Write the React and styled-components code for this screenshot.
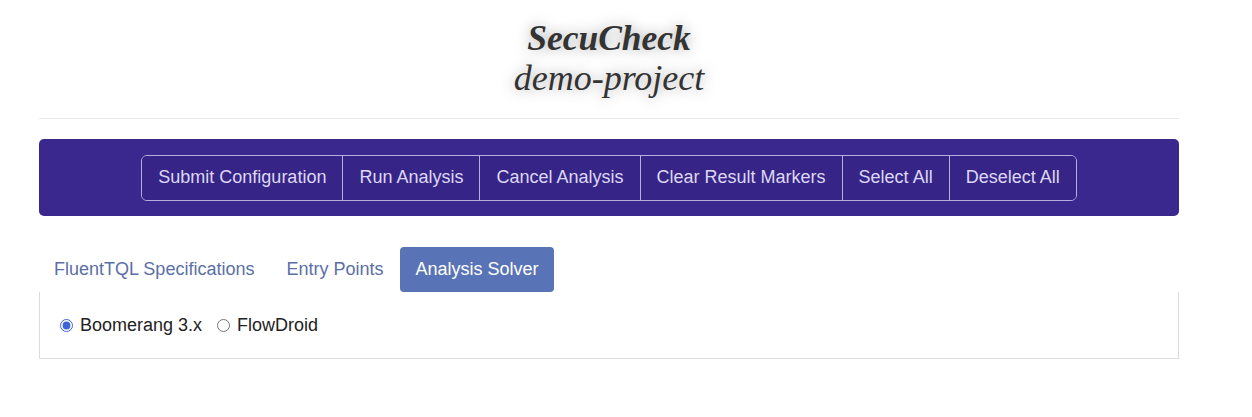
import React, { useState } from "react";
import styled, { createGlobalStyle } from "styled-components";

const GlobalStyle = createGlobalStyle`
  body {
    margin: 0;
    background: #fff;
    font-family: "Liberation Sans", Arial, sans-serif;
  }
`;

const Page = styled.div`
  width: 1140px;
  margin-left: 39px;
  padding-top: 19px;
`;

const Header = styled.header`
  display: flex;
  flex-direction: column;
  align-items: center;
  font-family: "Liberation Serif", "Times New Roman", serif;
  font-style: italic;
  color: #333;
  text-shadow: 0 0 14px rgba(0, 0, 0, 0.35);
  padding-bottom: 20px;
  border-bottom: 1px solid #eaeaea;
`;

const Title = styled.h1`
  margin: 0;
  font-size: 35.5px;
  font-weight: bold;
  line-height: 39px;
`;

const Subtitle = styled.h2`
  margin: 0;
  font-size: 36px;
  font-weight: normal;
  line-height: 40px;
`;

const Toolbar = styled.div`
  margin-top: 20px;
  height: 77px;
  background: #3b288f;
  border-radius: 5px;
  display: flex;
  align-items: center;
  justify-content: center;
`;

const ButtonGroup = styled.div`
  display: flex;
  border: 1px solid #b7aee0;
  border-radius: 6px;
  overflow: hidden;
`;

const ToolButton = styled.button`
  height: 44px;
  padding: 0 16px;
  background: #362587;
  color: #ddd7f5;
  border: none;
  border-left: ${(p) => (p.$first ? "none" : "1px solid #b7aee0")};
  font-family: "Liberation Sans", Arial, sans-serif;
  font-size: 18px;
  cursor: pointer;
`;

const Tabs = styled.nav`
  display: flex;
  gap: 2px;
  margin-top: 31px;
`;

const Tab = styled.button`
  height: 45px;
  padding: 0 15px;
  border: none;
  border-radius: 4px;
  background: ${(p) => (p.$active ? "#5874b6" : "transparent")};
  color: ${(p) => (p.$active ? "#fff" : "#5b6fa6")};
  font-family: "Liberation Sans", Arial, sans-serif;
  font-size: 18px;
  cursor: pointer;
`;

const Panel = styled.div`
  height: 67px;
  border: 1px solid #dcdcdc;
  border-top: none;
  display: flex;
  align-items: center;
  padding-left: 20px;
  box-sizing: border-box;
`;

const RadioLabel = styled.label`
  display: flex;
  align-items: center;
  font-size: 18px;
  color: #222;
  margin-right: 15px;
  input {
    margin: 0 7px 0 0;
    width: 13px;
    height: 13px;
    accent-color: #3f63d9;
  }
`;

const buttons = [
  "Submit Configuration",
  "Run Analysis",
  "Cancel Analysis",
  "Clear Result Markers",
  "Select All",
  "Deselect All",
];

const tabs = ["FluentTQL Specifications", "Entry Points", "Analysis Solver"];

export default function App() {
  const [tab, setTab] = useState(2);
  const [solver, setSolver] = useState("boomerang");

  return (
    <>
      <GlobalStyle />
      <Page>
        <Header>
          <Title>SecuCheck</Title>
          <Subtitle>demo-project</Subtitle>
        </Header>
        <Toolbar>
          <ButtonGroup>
            {buttons.map((b, i) => (
              <ToolButton key={b} $first={i === 0}>
                {b}
              </ToolButton>
            ))}
          </ButtonGroup>
        </Toolbar>
        <Tabs>
          {tabs.map((t, i) => (
            <Tab key={t} $active={tab === i} onClick={() => setTab(i)}>
              {t}
            </Tab>
          ))}
        </Tabs>
        <Panel>
          <RadioLabel>
            <input
              type="radio"
              name="solver"
              checked={solver === "boomerang"}
              onChange={() => setSolver("boomerang")}
            />
            Boomerang 3.x
          </RadioLabel>
          <RadioLabel>
            <input
              type="radio"
              name="solver"
              checked={solver === "flowdroid"}
              onChange={() => setSolver("flowdroid")}
            />
            FlowDroid
          </RadioLabel>
        </Panel>
      </Page>
    </>
  );
}
